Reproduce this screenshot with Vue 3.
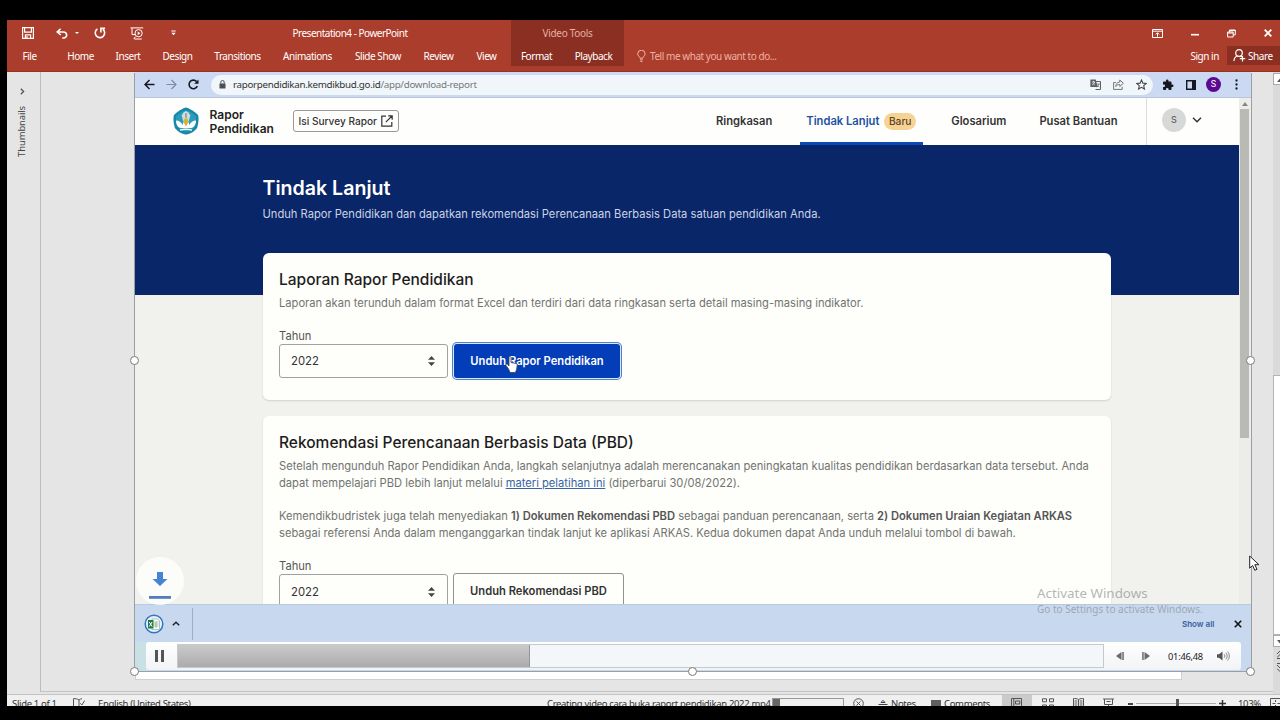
<template>
  <div class="screen">
    <div class="window">
      <!-- Ribbon -->
      <header class="ribbon">
        <div class="quick">
          <svg class="q-save" width="12" height="12" viewBox="0 0 12 12" fill="none" stroke="#fff" stroke-width="1.2">
            <path d="M.6.6h10.8v10.8H.6zM2.6.8v4.4h6.8V.8M3.4 11.2V7.8h5.2v3.4" />
            <path d="M5 9v2.4" />
          </svg>
          <svg class="q-undo" width="12" height="11" viewBox="0 0 12 11" fill="none" stroke="#fff" stroke-width="1.6">
            <path d="M4.6.8 1.2 4l3.6 3M1.4 4h5.8c4.6 0 4.6 6 .2 6H6.2" />
          </svg>
          <i class="q-caret"></i>
          <svg class="q-redo" width="12" height="12" viewBox="0 0 12 12" fill="none" stroke="#fff" stroke-width="1.6">
            <path d="M3.4 2A4.7 4.7 0 1 0 9 2.4M6.900 5.400V1.400h4.200" />
          </svg>
          <svg class="q-show" width="14" height="13" viewBox="0 0 14 13" fill="none" stroke="#fff" stroke-width="1">
            <path d="M.5.9h12.7M2 1v6.6h3M4.4 12h7.4M3.8 12l1.6-2.4" />
            <circle cx="8.6" cy="6.2" r="3.6" />
            <path d="m7.7 4.5 2.7 1.7-2.7 1.7z" fill="#fff" stroke="none" />
          </svg>
          <svg class="q-more" width="5" height="6" viewBox="0 0 5 6" fill="#fff">
            <path d="M.3.5h4.4v1H.3zM.3 2.8h4.4L2.5 5.2z" />
          </svg>
        </div>
        <div class="doc-title">Presentation4 - PowerPoint</div>
        <div class="win-buttons">
          <svg width="11" height="9" viewBox="0 0 11 9" fill="none" stroke="#fff">
            <path d="M.5.5h10v8H.5zM.5 2.2h10M5.5 7.6V4M3.8 5.4l1.7-1.7 1.7 1.7" />
          </svg>
          <svg width="8" height="9" viewBox="0 0 8 9" stroke="#fff" stroke-width="1.6"><path d="M0 5.7h8" /></svg>
          <svg width="9" height="9" viewBox="0 0 9 9" fill="none" stroke="#fff">
            <path d="M.6 3h5.6v5H.6zM.6 4h5.6M2.5 3V1h5.8v4.8H6.4M2.5 1.6h6" />
          </svg>
          <svg width="8" height="8" viewBox="0 0 8 8" stroke="#fff" stroke-width="1.8"><path d="m.7.7 6.6 6.6M7.3.7.7 7.3" /></svg>
        </div>
        <nav class="tabs">
          <span v-for="tab in tabs" :key="tab">{{ tab }}</span>
        </nav>
        <div class="tools">
          <div class="tools-title">Video Tools</div>
          <div class="tools-tabs"><span>Format</span><span>Playback</span></div>
        </div>
        <div class="tell">
          <svg width="9" height="12" viewBox="0 0 9 12" fill="none" stroke="#f2b3a6">
            <path d="M3 8.2C3 6.6.7 6 .7 3.9a3.7 3.7 0 0 1 7.4 0C8.1 6 5.8 6.6 5.8 8.2zM3 9.8h2.8M3.3 11.4h2.2" />
          </svg>
          <span>Tell me what you want to do...</span>
        </div>
        <div class="account">
          <span class="signin">Sign in</span>
          <span class="share">
            <svg width="13" height="13" viewBox="0 0 13 13" fill="none" stroke="#fff" stroke-width="1.2">
              <circle cx="6" cy="4" r="3.3" />
              <path d="M1 12c0-3 1.6-4.5 3.6-5M7.4 7l1.4 1M9.5 7v5.4M6.8 9.7h5.4" />
            </svg>
            Share
          </span>
        </div>
      </header>

      <main class="workspace">
        <aside class="thumbs">
          <svg width="5" height="7" viewBox="0 0 5 7" fill="none" stroke="#555" stroke-width="1.3"><path d="m.8.8 2.8 2.7L.8 6.2" /></svg>
          <span>Thumbnails</span>
        </aside>

        <section class="stage">
          <div class="slide"></div>
          <div class="video">
            <div class="chrome-bar">
              <svg width="11" height="11" viewBox="0 0 11 11" fill="none" stroke="#15181f" stroke-width="1.5"><path d="M10.5 5.5H1.2M5.5 1 1 5.5 5.5 10" /></svg>
              <svg width="11" height="11" viewBox="0 0 11 11" fill="none" stroke="#7f8aa0" stroke-width="1.2"><path d="M.5 5.5h9.3M5.5 1 10 5.5 5.5 10" /></svg>
              <svg width="11" height="11" viewBox="0 0 11 11" fill="none" stroke="#15181f" stroke-width="1.6"><path d="M9.3 7.2A4.3 4.3 0 1 1 8.6 2.500" /><path d="M10.500.4v4.300H6.200z" fill="#15181f" stroke="none" /></svg>
              <div class="address">
                <svg width="7" height="9" viewBox="0 0 7 9"><path d="M.5 3.5h6v5h-6z" fill="#4b4f55" /><path d="M1.8 3.600V2.200a1.700 1.700 0 0 1 3.400 0v1.400" fill="none" stroke="#4b4f55" /></svg>
                <span class="url">raporpendidikan.kemdikbud.go.id<em>/app/download-report</em></span>
                <svg width="11" height="11" viewBox="0 0 11 11" fill="none" stroke="#5b6066">
                  <path d="M4.5 2.5h6v8h-5" /><path d="M.4.4h5.4l1.8 7.7H.4z" fill="#5b6066" stroke="none" />
                  <path d="M2 3h3M3.5 2v1M4.6 3C4.3 4.6 3 5.5 2 6M2.6 4l2.2 2" stroke="#fff" stroke-width=".7" /><path d="M7 5h3M8.8 5c-.2 1.5-1 2.5-2 3.2M7.7 6.5l1.6 1.7" stroke-width=".7" />
                </svg>
                <svg width="11" height="11" viewBox="0 0 11 11" fill="none" stroke="#70757c">
                  <path d="M2.8 3.5H.6v6.9h8.6V7.8" /><path d="M6.8 1v2C4 3.200 3 5 2.800 7.500 4 6 5 5.500 6.800 5.500v2L10.400 4.200z" />
                </svg>
                <svg width="11" height="11" viewBox="0 0 24 24" fill="none" stroke="#41454b" stroke-width="2.3"><path d="m12 2 3 7 7.5.6-5.7 5 1.7 7.3-6.5-3.9-6.5 3.9 1.7-7.3-5.7-5L9 9z" /></svg>
              </div>
              <svg class="ext" width="12" height="12" viewBox="0 0 24 24" fill="#15181f"><path d="M20.5 11H19V7a2 2 0 0 0-2-2h-4V3.500a2.500 2.500 0 0 0-5 0V5H4a2 2 0 0 0-2 2v3.800h1.500a2.700 2.700 0 0 1 0 5.400H2V20a2 2 0 0 0 2 2h3.800v-1.500a2.700 2.700 0 0 1 5.400 0V22H17a2 2 0 0 0 2-2v-4h1.500a2.500 2.500 0 0 0 0-5z" /></svg>
              <svg class="panel" width="10" height="10" viewBox="0 0 10 10"><path d="M.7.7h8.6v8.6H.7z" fill="none" stroke="#15181f" stroke-width="1.4" /><path d="M6 1h3.5v8H6z" fill="#15181f" /></svg>
              <b class="profile">S</b>
              <svg class="dots" width="3" height="11" viewBox="0 0 3 11" fill="#15181f"><circle cx="1.5" cy="1.5" r="1.15" /><circle cx="1.5" cy="5.5" r="1.15" /><circle cx="1.5" cy="9.5" r="1.15" /></svg>
            </div>

            <div class="viewport">
              <div class="site">
                <header class="site-head">
                  <svg class="logo" width="28" height="28" viewBox="0 0 28 28">
                    <path d="M14 .5c2 0 10 5 12 7.5 1 2 .6 8-.8 12.5C24 23.5 18 27.5 14 27.5S4 23.5 2.8 20.5C1.4 16 1 10 2 8 4 5.5 12 .5 14 .5z" fill="#1688a8" />
                    <path d="M14 3.2c2 0 8.5 4 9.7 6 .8 2 .3 7-.7 10-1 2.3-6 5.6-9 5.6s-8-3.3-9-5.6c-1-3-1.5-8-.7-10 1.2-2 7.7-6 9.7-6z" fill="#2b9cba" />
                    <path d="M4 13.500c3 0 5.300 1.700 6.500 4.500l1-3h5l1 3c1.200-2.800 3.500-4.500 6.500-4.500 0 4-1.700 7-5 7.500H9c-3.300-.500-5-3.500-5-7.500z" fill="#fff" />
                    <path d="M11.500 5.500 14 4l2.500 1.500 1.800 3-1.600 6h-5.400l-1.600-6z" fill="#d5dddc" />
                    <path d="M12.500 11.500h3L16.500 15l-2.500 4.500-2.500-4.500z" fill="#d5b13a" />
                    <path d="M13.400 6h1.200v5h-1.200z" fill="#6f8b91" />
                    <path d="M8 23.200c4-1.200 8-1.200 12 0" fill="none" stroke="#fff" stroke-width="1.4" />
                  </svg>
                  <div class="brand">Rapor<br />Pendidikan</div>
                  <div class="survey">
                    Isi Survey Rapor
                    <svg width="12" height="12" viewBox="0 0 12 12" fill="none" stroke="#333" stroke-width="1.2"><path d="M5 1.2H.8v10h10V7M7.200.8h4v4M11 1 4.8 7.2" /></svg>
                  </div>
                  <nav class="menu">
                    <span class="m-ring">Ringkasan</span>
                    <span class="m-tindak">Tindak Lanjut <b>Baru</b></span>
                    <span class="m-glos">Glosarium</span>
                    <span class="m-pusat">Pusat Bantuan</span>
                  </nav>
                  <div class="user">
                    <b>S</b>
                    <svg width="10" height="6" viewBox="0 0 10 6" fill="none" stroke="#333" stroke-width="1.5"><path d="m1 .8 4 4 4-4" /></svg>
                  </div>
                </header>

                <div class="hero">
                  <h1>Tindak Lanjut</h1>
                  <p>Unduh Rapor Pendidikan dan dapatkan rekomendasi Perencanaan Berbasis Data satuan pendidikan Anda.</p>
                </div>

                <article class="card first">
                  <h2>Laporan Rapor Pendidikan</h2>
                  <p>Laporan akan terunduh dalam format Excel dan terdiri dari data ringkasan serta detail masing-masing indikator.</p>
                  <label>Tahun</label>
                  <div class="form-row">
                    <div class="select">2022 <svg width="7" height="10" viewBox="0 0 7 10" fill="#444"><path d="M0 3.8 3.5 0 7 3.8zM0 6.2h7L3.5 10z" /></svg></div>
                    <div class="button primary">Unduh Rapor Pendidikan</div>
                  </div>
                </article>

                <article class="card second">
                  <h2>Rekomendasi Perencanaan Berbasis Data (PBD)</h2>
                  <p class="l1">Setelah mengunduh Rapor Pendidikan Anda, langkah selanjutnya adalah merencanakan peningkatan kualitas pendidikan berdasarkan data tersebut. Anda<br />dapat mempelajari PBD lebih lanjut melalui <u>materi pelatihan ini</u> (diperbarui 30/08/2022).</p>
                  <p class="l2">Kemendikbudristek juga telah menyediakan <b>1) Dokumen Rekomendasi PBD</b> sebagai panduan perencanaan, serta <b>2) Dokumen Uraian Kegiatan ARKAS</b><br />sebagai referensi Anda dalam menganggarkan tindak lanjut ke aplikasi ARKAS. Kedua dokumen dapat Anda unduh melalui tombol di bawah.</p>
                  <label>Tahun</label>
                  <div class="form-row">
                    <div class="select">2022 <svg width="7" height="10" viewBox="0 0 7 10" fill="#444"><path d="M0 3.8 3.5 0 7 3.8zM0 6.2h7L3.5 10z" /></svg></div>
                    <div class="button outline">Unduh Rekomendasi PBD</div>
                  </div>
                </article>
              </div>
              <div class="page-scroll"><i></i><b></b></div>
            </div>

            <div class="downloads">
              <svg width="20" height="20" viewBox="0 0 20 20">
                <circle cx="10" cy="10" r="8.8" fill="#e9f2f7" stroke="#3474c4" stroke-width="1.5" />
                <path d="M8 5h5.5l2 2v8.5H8z" fill="#fff" stroke="#9aa9a0" stroke-width=".7" />
                <path d="M10 8h4.5M10 10h4.5M10 12h4.5M12 8v6" stroke="#84ad93" stroke-width=".8" />
                <path d="M4 6h5.5v8.5H4z" fill="#1c7d43" /><path d="m5.3 8 2.8 4.5M8.1 8l-2.8 4.5" stroke="#fff" stroke-width="1" />
              </svg>
              <svg class="chev" width="8" height="5" viewBox="0 0 8 5" fill="none" stroke="#222" stroke-width="1.5"><path d="m.8 4.3 3.2-3 3.2 3" /></svg>
              <span class="show-all">Show all</span>
              <svg class="close" width="8" height="8" viewBox="0 0 8 8" stroke="#111" stroke-width="1.6"><path d="m.8.8 6.4 6.4M7.200.8.8 7.200" /></svg>
            </div>

            <div class="player-area">
              <div class="player">
                <div class="pause"><i></i><i></i></div>
                <div class="track"><i :style="{ width: progress + '%' }"></i></div>
                <svg class="step back" width="8" height="8" viewBox="0 0 8 8" fill="#6a6a6a"><path d="M5.500 0v8L0 4zM6.300 0h1.500v8H6.300z" /></svg>
                <svg class="step fwd" width="8" height="8" viewBox="0 0 8 8" fill="#6a6a6a"><path d="M2.500 0v8L8 4zM.2 0h1.500v8H.2z" /></svg>
                <span class="time">01:46,48</span>
                <svg class="vol" width="13" height="10" viewBox="0 0 13 10" fill="none" stroke="#777"><path d="M0 3.2h2L5.500.4v9.200L2 6.800H0z" fill="#555" stroke="none" /><path d="M7 3.2c1 1 1 2.600 0 3.600M8.800 1.800c1.800 1.800 1.800 4.600 0 6.400M10.500.6c2.400 2.600 2.400 6.200 0 8.800" stroke-width=".9" /></svg>
              </div>
            </div>

            <div class="dl-bubble">
              <svg width="22" height="28" viewBox="0 0 22 28" fill="#4584d4"><path d="M8 0h6v7h4.500L11 14 3.500 7H8z" /><path d="M0 24h22v2.800H0z" fill="#4f7fc1" /></svg>
            </div>
            <div class="watermark"><strong>Activate Windows</strong><span>Go to Settings to activate Windows.</span></div>
            <svg class="hand" width="13" height="17" viewBox="0 0 13 17"><path d="M4 1.5c0-1.4 2-1.4 2 0v5l5 1c1 .3 1.3 1 1.2 2l-.6 4-1.200 3H5L3.600 13 1 9.500C.5 8.200 2 7.700 2.800 8.500L4 10z" fill="#fff" stroke="#39404c" stroke-width=".8" /></svg>
            <i class="grip nw"></i><i class="grip ne"></i><i class="grip sw"></i><i class="grip s"></i><i class="grip se"></i>
            <svg class="arrow" width="11" height="17" viewBox="0 0 11 17"><path d="M.7 1v12.200l2.900-2.700 2.200 4.800 2.200-1-2.200-4.600h4.100z" fill="#fff" stroke="#222" stroke-width="1" /></svg>
          </div>
        </section>

        <div class="doc-scroll">
          <div class="up"><svg width="6" height="4" viewBox="0 0 6 4"><path d="M0 4 3 .5 6 4z" fill="#555" /></svg></div>
          <div class="thumb"></div>
          <div class="down"><svg width="6" height="4" viewBox="0 0 6 4"><path d="M0 0h6L3 3.500z" fill="#555" /></svg></div>
          <svg class="pages" width="6" height="24" viewBox="0 0 6 24" fill="none" stroke="#555"><path d="m0 5 3-3 3 3M0 8.500l3-3 3 3M0 9.500h6M0 14.500h6M0 16l3 3 3-3M0 19.500l3 3 3-3" /></svg>
        </div>
      </main>

      <footer class="status">
        <span class="s-slide">Slide 1 of 1</span>
        <svg class="s-book" width="12" height="11" viewBox="0 0 12 11" fill="none" stroke="#555"><path d="M6 2C4.500.8 2.500.6.500.6v8c2 0 4 .2 5.500 1.400M6 2v8M6 2c1-.8 2-1.200 3-1.300M6 10l1.500-1M7.300 5.200l1.600 1.800 2.800-4.500" /></svg>
        <span class="s-lang">English (United States)</span>
        <span class="s-task">Creating video cara buka raport pendidikan 2022.mp4</span>
        <div class="s-progress"><i></i></div>
        <svg class="s-cancel" width="11" height="11" viewBox="0 0 11 11" fill="none" stroke="#555"><circle cx="5.5" cy="5.5" r="4.8" /><path d="m3.5 3.5 4 4M7.5 3.5l-4 4" /></svg>
        <svg class="s-notes-i" width="10" height="10" viewBox="0 0 10 10" fill="none" stroke="#444"><path d="M.5 5.500h9M.5 8.500h9M3 3.500 5 1.300l2 2.200z" /></svg>
        <span class="s-notes">Notes</span>
        <svg class="s-com-i" width="10" height="10" viewBox="0 0 10 10" fill="#606060"><path d="M0 1h10v6.500H5L3 9.500v-2H0z" /></svg>
        <span class="s-com">Comments</span>
        <div class="s-view">
          <svg width="11" height="11" viewBox="0 0 11 11" fill="none" stroke="#555"><path d="M.5.5h10v10H.5zM2.800.5v10M4.500 3h4.300v3H4.500zM4.500 8.500h4.500" /></svg>
        </div>
        <svg class="s-grid" width="12" height="11" viewBox="0 0 12 11" fill="none" stroke="#555"><path d="M.5.8h4v3h-4zM7.500.8h4v3h-4zM.5 7h4v3h-4zM7.500 7h4v3h-4z" /></svg>
        <svg class="s-read" width="11" height="11" viewBox="0 0 11 11" fill="none" stroke="#555"><path d="M5.500 1.500C4 .5 2 .5.500.5v9c1.500 0 3.500 0 5 1 1.500-1 3.500-1 5-1v-9c-1.500 0-3.500 0-5 1zM5.500 1.500v9M1.500 3h2.800M1.500 5h2.800M1.500 7h2.800M6.700 3h2.800M6.700 5h2.800M6.700 7h2.800" /></svg>
        <svg class="s-play" width="11" height="11" viewBox="0 0 11 11" fill="none" stroke="#555"><path d="M0 1h11M1.500 1v5.500h8V1M5.500 6.500v3M3 10h5M3.500 3.500h4" /></svg>
        <i class="s-minus"></i>
        <div class="s-zoom"><i></i></div>
        <svg class="s-plus" width="7" height="7" viewBox="0 0 7 7" stroke="#333" stroke-width="1.5"><path d="M0 3.500h7M3.500 0v7" /></svg>
        <span class="s-percent">103%</span>
        <svg class="s-fit" width="11" height="11" viewBox="0 0 11 11" fill="none" stroke="#555"><path d="M.5.5h12v10H.5zM2.500 5.500h3M5.500 2v2M5.500 7v2M7.500 5.500h3" /></svg>
      </footer>
    </div>
  </div>
</template>

<script setup>
const tabs = ['File', 'Home', 'Insert', 'Design', 'Transitions', 'Animations', 'Slide Show', 'Review', 'View'];
const progress = 38.1;
</script>

<style>
body {
  background: #000;
  overflow: hidden;
}
</style>

<style scoped>
* {
  box-sizing: border-box;
}

svg {
  display: block;
  flex: none;
}

i,
em {
  font-style: normal;
}

.screen {
  width: 1280px;
  height: 720px;
  padding: 20px 0 14px 7px;
  background: #000;
  font-family: "Noto Sans", "Open Sans", sans-serif;
  white-space: nowrap;
}

.window {
  height: 686px;
  overflow: hidden;
  background: #e5e5e5;
  display: flex;
  flex-direction: column;
}

/* Ribbon */
.ribbon {
  height: 52px;
  flex: none;
  display: grid;
  grid-template-columns: 504px 113px 1fr 200px;
  grid-template-rows: 26px 26px;
  background: #ab3d2c;
  border-bottom: 1px solid #97331f;
  color: #fff;
  font-size: 10px;
  letter-spacing: -0.45px;
}

.quick {
  grid-area: 1 / 1;
  display: flex;
  align-items: center;
  padding-left: 15px;
}

.q-undo {
  margin-left: 22px;
}

.q-caret {
  margin-left: 7px;
  border: 2px solid transparent;
  border-top-color: #fff;
  border-bottom: 0;
}

.q-redo {
  margin-left: 15px;
}

.q-show {
  margin-left: 24px;
}

.q-more {
  margin-left: 27px;
}

.doc-title {
  grid-area: 1 / 1;
  justify-self: end;
  width: 220px;
  text-align: center;
  line-height: 27px;
  margin-right: 51px;
  letter-spacing: -0.5px;
}

.win-buttons {
  grid-area: 1 / 4;
  display: flex;
  align-items: center;
  justify-content: flex-end;
  gap: 28px;
  padding-right: 8px;
}

.tabs {
  grid-area: 2 / 1;
  display: grid;
  grid-template-columns: 45px 57px 38px 61px 59px 81px 60px 61px 35px;
  text-align: center;
  line-height: 21px;
}

.tools {
  grid-area: 1 / 2 / 3 / 3;
  height: 46px;
  background: #8a2f22;
}

.tools-title {
  text-align: center;
  color: #e5b0a5;
  line-height: 27px;
  height: 26px;
  letter-spacing: -0.3px;
}

.tools-tabs {
  display: grid;
  grid-template-columns: 51px 63px;
  text-align: center;
  line-height: 21px;
}

.tell {
  grid-area: 2 / 3;
  display: flex;
  gap: 4px;
  padding-left: 13px;
  color: #efb0a3;
  line-height: 21px;
}

.tell svg {
  margin-top: 4px;
}

.account {
  grid-area: 2 / 4;
  display: flex;
  justify-content: flex-end;
  line-height: 20px;
}

.signin {
  margin-right: 8px;
}

.share {
  display: flex;
  align-items: center;
  gap: 2px;
  width: 53px;
  height: 19px;
  padding-left: 6px;
  background: #8a2f22;
}

/* Editing area */
.workspace {
  height: 622px;
  flex: none;
  display: flex;
}

.thumbs {
  flex: none;
  width: 34px;
  height: 620px;
  border-right: 1px solid #bdbdbd;
  display: flex;
  flex-direction: column;
  align-items: center;
  padding: 16px 3px 0 0;
}

.thumbs span {
  margin-top: 11px;
  writing-mode: vertical-rl;
  transform: rotate(180deg);
  color: #444;
  font-size: 9.5px;
  line-height: 14px;
  letter-spacing: -0.15px;
}

.stage {
  position: relative;
  flex: none;
  width: 1232px;
  height: 620px;
  padding-left: 94px;
  border-bottom: 1px solid #c4c4c4;
}

.slide {
  position: absolute;
  left: 94px;
  top: 0;
  width: 1047px;
  height: 608px;
  background: #fff;
  border: 1px solid #cfcfcf;
}

.video {
  position: relative;
  width: 1116px;
  height: 599px;
  background: #c8d8ef;
  box-shadow: -1px 1px 0 #9a9fa3, 1px 1px 0 #9a9fa3;
}

.chrome-bar {
  display: flex;
  align-items: center;
  height: 26px;
  padding: 0 13px 0 9px;
  background: #cbd9f2;
  border-bottom: 1px solid #b9c4d6;
}

.chrome-bar > svg + svg {
  margin-left: 11px;
}

.address {
  display: flex;
  align-items: center;
  width: 942px;
  height: 20px;
  margin-left: 12px;
  padding: 0 6px 0 8px;
  border-radius: 10px;
  background: #f1f6fa;
}

.url {
  flex: 1;
  margin-left: 7px;
  color: #333;
  font-size: 9.8px;
  letter-spacing: -0.31px;
}

.url em {
  color: #74797d;
}

.address svg + svg {
  margin-left: 12px;
}

.ext {
  margin-left: 9px;
}

.chrome-bar .panel {
  margin-left: 12px;
}

.profile {
  width: 15px;
  height: 15px;
  margin: 0 14px 0 10px;
  border-radius: 50%;
  background: #5b0a91;
  color: #fff;
  font: 9px/15px Roboto, sans-serif;
  text-align: center;
}

/* Browser page */
.viewport {
  height: 506px;
  display: flex;
  overflow: hidden;
  background: #f1f2ee;
  font-family: Inter, sans-serif;
}

.site {
  flex: none;
  width: 1104px;
}

.site-head {
  display: flex;
  align-items: center;
  height: 47px;
  padding-left: 37px;
  background: #fefefc;
}

.logo {
  margin-bottom: 1px;
}

.brand {
  width: 83px;
  margin-left: 9.5px;
  color: #222;
  font-size: 12px;
  font-weight: 600;
  line-height: 13.5px;
}

.survey {
  display: flex;
  align-items: center;
  gap: 4px;
  width: 106px;
  height: 22px;
  margin-bottom: 1px;
  padding-left: 5px;
  border: 1px solid #999;
  border-radius: 3px;
  color: #333;
  font-size: 10.1px;
  font-weight: 500;
}

.menu {
  display: flex;
  margin-left: 317.5px;
  color: #333;
  font-size: 11.2px;
  font-weight: 600;
  line-height: 46px;
}

.m-tindak {
  width: 123px;
  height: 47px;
  margin: 0 28px;
  padding-left: 6px;
  border-bottom: 3px solid #0b49b5;
  color: #1c51a3;
}

.menu b {
  display: inline-block;
  width: 32px;
  margin-left: 2px;
  border-radius: 9px;
  background: #f6d394;
  color: #5a4423;
  font-size: 10.2px;
  font-weight: 500;
  line-height: 17px;
  text-align: center;
}

.m-pusat {
  margin-left: 33px;
}

.user {
  display: flex;
  align-items: center;
  height: 47px;
  width: 93px;
  margin-left: auto;
  padding: 0 0 4px 15px;
  border-left: 1px solid #ddd;
}

.user b {
  width: 24px;
  height: 24px;
  margin-right: 6px;
  border-radius: 50%;
  background: #d7d9d9;
  color: #666;
  font-size: 9px;
  font-weight: 500;
  line-height: 24px;
  text-align: center;
}

.hero {
  height: 150px;
  padding: 31px 0 0 127.5px;
  background: #092668;
  color: #fff;
}

.hero h1 {
  margin: 0;
  font-size: 19.6px;
  font-weight: 600;
  line-height: 24px;
}

.hero p {
  margin: 6px 0 0;
  color: #cbd3e6;
  font-size: 11.16px;
  line-height: 17px;
}

.card {
  position: relative;
  width: 848px;
  margin-left: 128px;
  padding: 17px 16px 0;
  border-radius: 6px;
  background: #fefefb;
  box-shadow: 0 1px 2px rgba(0, 0, 0, 0.14);
}

.first {
  height: 147px;
  margin-top: -42px;
}

.second {
  height: 240px;
  margin-top: 16px;
}

.card h2 {
  margin: 0;
  color: #1d1d1d;
  font-size: 15.5px;
  font-weight: 500;
  line-height: 20px;
}

.card p {
  margin: 5px 0 0;
  color: #707471;
  font-size: 11.16px;
  line-height: 16.6px;
}

.card .l2 {
  margin-top: 17px;
}

.card p b {
  color: #555;
  font-weight: 600;
}

.card u {
  color: #3864a5;
}

.card label {
  display: block;
  margin-top: 16px;
  color: #555;
  font-size: 11.16px;
  line-height: 16px;
}

.second label {
  margin-top: 17px;
}

.form-row {
  display: flex;
  gap: 6px;
}

.select {
  display: flex;
  align-items: center;
  justify-content: space-between;
  width: 169px;
  height: 34px;
  padding: 1px 12px 0 11px;
  border: 1px solid #a0a2a0;
  border-radius: 3px;
  color: #333;
  font-size: 11.3px;
}

.button {
  height: 34px;
  padding-top: 1px;
  border-radius: 3px;
  font-size: 11.2px;
  font-weight: 600;
  line-height: 32px;
  text-align: center;
}

.primary {
  width: 166px;
  background: #043db8;
  color: #fff;
  box-shadow: 0 0 0 1px #d9e8f8, 0 0 0 2px #4d83c9;
}

.outline {
  width: 171px;
  margin: -1px 0 0 -1px;
  border: 1px solid #8f9290;
  color: #333;
}

.page-scroll {
  width: 12px;
  background: #ecede9;
}

.page-scroll i {
  display: block;
  margin: 4px auto 3px;
  width: 6px;
  border: 3px solid transparent;
  border-top: 0;
  border-bottom: 4px solid #858785;
}

.page-scroll b {
  display: block;
  width: 9px;
  height: 329px;
  margin-left: 1px;
  background: #b9bab6;
}

/* Download shelf */
.downloads {
  display: flex;
  align-items: center;
  height: 38px;
  padding-left: 9px;
  background: #c8d8ef;
  border-top: 1px solid #b9c8df;
}

.chev {
  margin-left: 8px;
}

.show-all {
  display: flex;
  align-items: center;
  flex: 1;
  height: 32px;
  margin-left: 12px;
  padding-left: 989px;
  border-left: 1px solid #9fadc5;
  color: #35619f;
  font: 600 8px Inter, sans-serif;
}

.close {
  margin-right: 9px;
}

/* Player controls */
.player-area {
  height: 29px;
  padding: 0 10px 1px 11px;
  background: linear-gradient(90deg, #c9e0e5 14px, #c8d8ef 0);
}

.player {
  display: flex;
  align-items: center;
  height: 28px;
  border-radius: 3px;
  background: linear-gradient(#fff, #f1f3f5);
}

.pause {
  display: flex;
  gap: 3px;
  padding-left: 9px;
  width: 31px;
}

.pause i {
  width: 3px;
  height: 12px;
  background: #555;
}

.track {
  width: 927px;
  height: 24px;
  border: 1px solid #c1cbd0;
  background: #f4f7fa;
}

.track i {
  display: block;
  height: 100%;
  background: linear-gradient(#cbc9ca, #acabac);
  border-right: 1px solid #969696;
}

.back {
  margin-left: 12px;
}

.fwd {
  margin-left: 18px;
}

.time {
  width: 36px;
  margin-left: 18px;
  color: #222;
  font-size: 9.3px;
  letter-spacing: -0.25px;
}

.vol {
  margin-left: 13px;
}

/* Things floating over the video */
.dl-bubble {
  position: absolute;
  left: 1px;
  top: 485px;
  width: 48px;
  height: 48px;
  padding: 15px 0 0 12.5px;
  border-radius: 50%;
  background: rgba(253, 253, 250, 0.9);
}

.watermark {
  position: absolute;
  left: 902px;
  top: 512px;
  color: rgba(130, 135, 135, 0.62);
}

.watermark strong {
  display: block;
  font-size: 13.4px;
  font-weight: 400;
  line-height: 18px;
}

.watermark span {
  display: block;
  font-size: 10px;
  line-height: 14px;
}

.hand {
  position: absolute;
  left: 370px;
  top: 284px;
}

.arrow {
  position: absolute;
  left: 1114px;
  top: 483px;
}

.grip {
  position: absolute;
  width: 9px;
  height: 9px;
  border: 1.5px solid #7b7b7b;
  border-radius: 50%;
  background: #fff;
}

.nw {
  left: -5px;
  top: 284px;
}

.ne {
  left: 1111px;
  top: 284px;
}

.sw {
  left: -5px;
  top: 595px;
}

.s {
  left: 553px;
  top: 595px;
}

.se {
  left: 1111px;
  top: 595px;
}

/* Document scrollbar */
.doc-scroll {
  flex: none;
  width: 12px;
  background: #dadada;
}

.up,
.down {
  height: 12px;
  padding: 4px 0 0 3px;
  border: 1px solid #aaa;
  background: #fff;
}

.up {
  margin-top: 1px;
}

.thumb {
  height: 260px;
  margin-top: 290px;
  border: 1px solid #b4b4b4;
  background: #fff;
}

.pages {
  margin: 2px 0 0 4px;
}

/* Status bar, lower part is cut off by the window edge */
.status {
  display: flex;
  align-items: center;
  flex: none;
  height: 18px;
  border-top: 1px solid #c3c3c3;
  background: #f0f0f0;
  color: #333;
  font-size: 9.5px;
  letter-spacing: -0.33px;
}

.status span {
  flex: none;
}

.s-slide {
  width: 61px;
  padding-left: 5px;
}

.s-book {
  margin-left: 5px;
}

.s-lang {
  margin-left: 13px;
  width: 449px;
}

.s-task {
  width: 224px;
}

.s-progress {
  flex: none;
  width: 72px;
  height: 11px;
  margin-left: 1px;
  border: 1px solid #999;
}

.s-progress i {
  display: block;
  width: 7px;
  height: 9px;
  background: #666;
}

.s-cancel {
  margin-left: 9px;
}

.s-notes-i {
  margin-left: 14px;
}

.s-notes {
  width: 40px;
  margin-left: 3px;
}

.s-com {
  width: 58px;
  margin-left: 3px;
}

.s-view {
  flex: none;
  width: 30px;
  height: 18px;
  padding: 3px 0 0 9px;
  background: #cbcbcb;
}

.s-grid {
  margin-left: 10px;
}

.s-read {
  margin-left: 19px;
}

.s-play {
  margin-left: 19px;
}

.s-minus {
  flex: none;
  width: 5px;
  height: 2px;
  margin-left: 14px;
  background: #444;
}

.s-zoom {
  flex: none;
  width: 80px;
  height: 1px;
  margin: 0 3px;
  background: #aaa;
}

.s-zoom i {
  display: block;
  width: 3px;
  height: 9px;
  margin-left: 40px;
  transform: translateY(-4px);
  background: #555;
}

.s-percent {
  width: 24px;
  margin: 0 8px 0 12px;
}
</style>
